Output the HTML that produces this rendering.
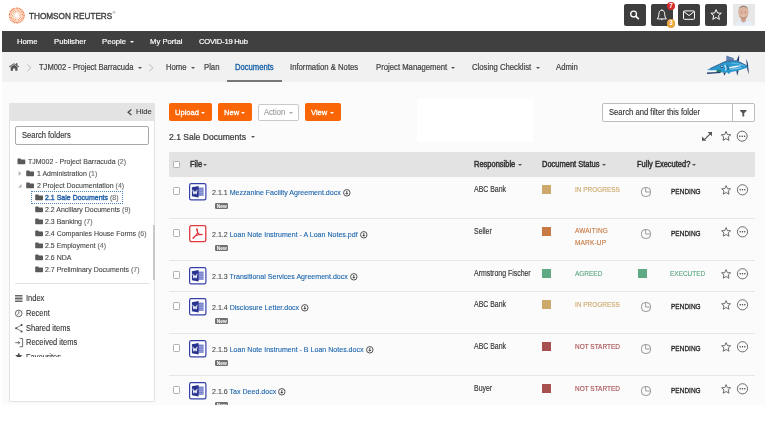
<!DOCTYPE html>
<html><head><meta charset="utf-8">
<style>
html,body{margin:0;padding:0;}
body{width:768px;height:432px;overflow:hidden;position:relative;background:#fff;font-family:"Liberation Sans",sans-serif;}
.a{position:absolute;}
.t{position:absolute;white-space:nowrap;line-height:1;transform:scaleY(1.1);transform-origin:0 50%;will-change:transform;}
svg{position:absolute;overflow:visible;}
#nav{left:2px;top:31px;width:763px;height:20.5px;background:#404040;}
#sub{left:2px;top:51.5px;width:763px;height:30px;background:#f1f1f1;}
#cont{left:2px;top:81.5px;width:763px;height:323px;background:#fbfbfb;}
.nv{color:#fff;font-size:7.7px;top:38.1px;-webkit-text-stroke:0.18px #fff;transform:scaleY(1.03)!important;}
.sn{color:#444;font-size:7.72px;top:63.9px;-webkit-text-stroke:0.2px #444;}
.caret{position:absolute;width:0;height:0;border-left:2px solid transparent;border-right:2px solid transparent;border-top:2px solid #555;}
#panel{left:8.8px;top:103.3px;width:146.2px;height:298.4px;background:#fff;border:1.1px solid #e2e2e2;border-radius:1px;box-sizing:border-box;}
#phead{left:8.8px;top:103.3px;width:146.2px;height:17.5px;background:#e3e3e3;border-radius:2px 2px 0 0;}
.tr{color:#444;font-size:7.0px;-webkit-text-stroke:0.1px #444;}
.li{color:#333;font-size:7.5px;-webkit-text-stroke:0.1px #333;}
.btn{position:absolute;top:103.3px;height:17.7px;background:#fa6505;border-radius:2px;}
.bt{color:#fff;font-size:7.55px;font-weight:400;top:108.5px;-webkit-text-stroke:0.28px #fff;transform:scaleY(1.03)!important;}
.hd{color:#333;font-size:7.5px;font-weight:400;top:160.5px;-webkit-text-stroke:0.42px #333;}
.sep{position:absolute;left:168.5px;width:586px;height:1px;background:#e6e6e6;}
.cb{position:absolute;width:5.4px;height:5.6px;border:0.75px solid #b0b0b0;border-radius:1.2px;background:#fff;}
.fn{font-size:7.07px;color:#4a4a4a;-webkit-text-stroke:0.1px #4a4a4a;}
.fn b{font-weight:400;color:#1b64ad;-webkit-text-stroke:0.1px #1b64ad;}
.new{position:absolute;width:13.4px;height:6.4px;background:#707070;border-radius:1.2px;color:#fff;font-size:4.8px;font-weight:700;line-height:7.2px;text-align:center;will-change:transform;}
.rs{color:#333;font-size:6.95px;-webkit-text-stroke:0.12px #333;transform:scaleY(1.17)!important;}
.sw{position:absolute;width:9px;height:9px;}
.st{font-size:6.48px;-webkit-text-stroke:0.12px currentColor;transform:scaleY(1.2)!important;}
.pd{color:#1c1c1c;font-size:6.45px;font-weight:400;-webkit-text-stroke:0.24px #1c1c1c;letter-spacing:0.05px;transform:scaleY(1.19)!important;}
</style></head><body>

<!-- top header -->
<svg style="left:8px;top:7px" width="18" height="18" viewBox="0 0 18 18">
  <circle cx="8.75" cy="8.45" r="7.3" fill="none" stroke="#f36b2a" stroke-width="1.3" stroke-dasharray="0.9 0.55"/>
  <circle cx="8.75" cy="8.45" r="5.7" fill="none" stroke="#f47a3c" stroke-width="1.2" stroke-dasharray="0.8 0.6" transform="rotate(12 8.75 8.45)"/>
  <circle cx="8.75" cy="8.45" r="4.1" fill="none" stroke="#f58a50" stroke-width="1.1" stroke-dasharray="0.7 0.6" transform="rotate(25 8.75 8.45)"/>
  <circle cx="8.75" cy="8.45" r="2.6" fill="none" stroke="#f7a070" stroke-width="0.9" stroke-dasharray="0.6 0.6"/>
</svg>
<div class="t" style="left:28.9px;top:11.2px;font-size:8.2px;font-weight:400;color:#404040;-webkit-text-stroke:0.35px #404040;transform:scaleY(1.08);transform-origin:0 0;">THOMSON REUTERS<span style="font-size:4px;vertical-align:4px;-webkit-text-stroke:0;margin-left:0.3px;">®</span></div>

<!-- top right buttons -->
<div class="a" style="left:624px;top:4.3px;width:21.5px;height:21.5px;background:#3d3d3d;border-radius:2px;"></div>
<svg style="left:624px;top:4.3px" width="22" height="22" viewBox="0 0 22 22">
  <circle cx="9.6" cy="10.1" r="2.9" fill="none" stroke="#fff" stroke-width="1.3"/>
  <line x1="11.8" y1="12.3" x2="14.4" y2="14.6" stroke="#fff" stroke-width="1.7" stroke-linecap="round"/>
</svg>
<div class="a" style="left:651px;top:4.3px;width:21.5px;height:21.5px;background:#3d3d3d;border-radius:2px;"></div>
<svg style="left:651px;top:4.3px" width="22" height="22" viewBox="0 0 22 22">
  <path d="M6.2 14.9 Q7.9 13.3 7.9 10.4 Q7.9 6.3 10.8 6.3 Q13.7 6.3 13.7 10.4 Q13.7 13.3 15.4 14.9 Z" fill="none" stroke="#fff" stroke-width="0.95" stroke-linejoin="round"/>
  <circle cx="10.8" cy="5.8" r="0.6" fill="#fff"/>
  <path d="M9.7 15.3 Q10.8 17.2 11.9 15.3 Z" fill="#fff"/>
</svg>
<div class="a" style="left:666.8px;top:1.7px;width:8.6px;height:8.6px;background:#d42a2a;border-radius:50%;color:#fff;font-size:6.4px;font-weight:700;line-height:8.8px;text-align:center;">7</div>
<div class="a" style="left:666.8px;top:19.4px;width:8.6px;height:8.6px;background:#eba33b;border-radius:50%;color:#fff;font-size:6.4px;font-weight:700;line-height:8.8px;text-align:center;">3</div>
<div class="a" style="left:678px;top:4.3px;width:22px;height:21.5px;background:#3d3d3d;border-radius:2px;"></div>
<svg style="left:678px;top:4.3px" width="22" height="22" viewBox="0 0 22 22">
  <rect x="5.5" y="6.9" width="11" height="8.4" rx="1" fill="none" stroke="#fff" stroke-width="1"/>
  <path d="M5.8 7.5 L11 11.6 L16.2 7.5" fill="none" stroke="#fff" stroke-width="1"/>
</svg>
<div class="a" style="left:705.2px;top:4.3px;width:21.8px;height:21.5px;background:#3d3d3d;border-radius:2px;"></div>
<svg style="left:705.2px;top:4.3px" width="22" height="22" viewBox="0 0 22 22">
  <path d="M11.1 5.6 L12.6 9 L16.3 9.2 L13.5 11.6 L14.4 15.4 L11.1 13.4 L7.8 15.4 L8.7 11.6 L5.9 9.2 L9.6 9 Z" fill="none" stroke="#fff" stroke-width="1" stroke-linejoin="round"/>
</svg>
<!-- avatar -->
<svg style="left:732.6px;top:4.2px" width="22" height="21.6" viewBox="0 0 22 21.6">
  <rect width="22" height="21.6" fill="#e7e7e7"/>
  <path d="M1.5 21.6 Q2.5 17.6 7 16.6 L10.5 16 L14 16.6 Q19 17.6 21 21.6 Z" fill="#e6edf6"/>
  <path d="M7.5 16.8 L10.4 19.2 L13.5 16.8" fill="none" stroke="#c9d3e0" stroke-width="0.5"/>
  <path d="M8 13.4 L13 13.4 L12.8 17 L10.5 18.4 L8.2 17Z" fill="#cfa28c"/>
  <ellipse cx="10.4" cy="8.3" rx="5.1" ry="6.6" fill="#dcb4a0"/>
  <path d="M5.3 8 Q5.2 1.4 10.4 1.4 Q15.6 1.4 15.5 8 Q15.3 5.6 14.6 4.4 Q12.8 2.8 10.4 2.9 Q7.8 2.8 6.2 4.4 Q5.5 5.6 5.3 8Z" fill="#9e8a80"/>
  <path d="M6 10.5 Q6.8 14.8 10.4 15 Q14 14.8 14.8 10.5 Q14 13.2 10.4 13.6 Q6.8 13.2 6 10.5Z" fill="#b98f7a"/>
  <ellipse cx="8.4" cy="8.2" rx="0.55" ry="0.4" fill="#5b3d30"/><ellipse cx="12.4" cy="8.2" rx="0.55" ry="0.4" fill="#5b3d30"/>
  <path d="M8.8 11.6 Q10.4 12.5 12 11.6" fill="none" stroke="#f4e6de" stroke-width="0.55"/>
</svg>

<!-- nav -->
<div id="nav" class="a"></div>
<div class="t nv" style="left:16.6px">Home</div>
<div class="t nv" style="left:53.8px">Publisher</div>
<div class="t nv" style="left:101.6px">People</div>
<div class="caret" style="left:129.8px;top:41px;border-top-color:#fff;"></div>
<div class="t nv" style="left:149.8px">My Portal</div>
<div class="t nv" style="left:198.5px;font-size:7.6px;letter-spacing:-0.2px;">COVID-19 Hub</div>

<!-- subnav -->
<div id="sub" class="a"></div>
<svg style="left:8.9px;top:63.2px" width="10.2" height="7.8" viewBox="0 0 10.2 7.8">
  <path d="M0 3.6 L5.1 0.2 L10.2 3.6 L9.6 4.3 L5.1 1.3 L0.6 4.3 Z" fill="#555"/>
  <path d="M1.7 3.9 L5.1 1.7 L8.5 3.9 L8.5 7.8 L6.2 7.8 L6.2 5.6 L4 5.6 L4 7.8 L1.7 7.8 Z" fill="#555"/>
  <rect x="7.1" y="0.1" width="1.3" height="2.6" fill="#555"/>
</svg>
<svg style="left:26.9px;top:63.5px" width="4.4" height="7.4" viewBox="0 0 4.4 7.4"><path d="M0.4 0.3 L3.9 3.7 L0.4 7.1" fill="none" stroke="#a0a0a0" stroke-width="0.7"/></svg>
<div class="t sn" style="left:38.7px;font-size:7.55px;">TJM002 - Project Barracuda</div>
<div class="caret" style="left:137.8px;top:66.6px;"></div>
<svg style="left:149.3px;top:63.5px" width="4.4" height="7.4" viewBox="0 0 4.4 7.4"><path d="M0.4 0.3 L3.9 3.7 L0.4 7.1" fill="none" stroke="#a0a0a0" stroke-width="0.7"/></svg>
<div class="t sn" style="left:166.3px">Home</div>
<div class="caret" style="left:191.3px;top:66.6px;"></div>
<div class="t sn" style="left:203.5px">Plan</div>
<div class="t sn" style="left:235.3px;font-size:7.65px;color:#1a62a8;-webkit-text-stroke:0.3px #1a62a8;">Documents</div>
<div class="a" style="left:227.3px;top:79.5px;width:55px;height:2px;background:#777;"></div>
<div class="t sn" style="left:290.3px">Information &amp; Notes</div>
<div class="t sn" style="left:375.6px">Project Management</div>
<div class="caret" style="left:451.4px;top:66.6px;"></div>
<div class="t sn" style="left:471.9px">Closing Checklist</div>
<div class="caret" style="left:535.6px;top:66.6px;"></div>
<div class="t sn" style="left:556px">Admin</div>
<!-- fish -->
<svg style="left:706px;top:54px" width="44" height="23" viewBox="0 0 44 23">
  <path d="M20.2 7.6 L20.2 1.4 L28 4.3 L28 6.6 Z" fill="#6f8fbc"/>
  <path d="M22 2.4 L22 7.3 M24 3 L24 7 M26 3.6 L26 6.8" stroke="#3f5f90" stroke-width="0.6"/>
  <path d="M30.6 6.6 L33.2 0.8 L33 7 Z" fill="#1d3a6a"/>
  <path d="M40.2 4.8 L41.8 9 L43 20.4 L41.4 16 L40.9 12Z" fill="#1d3a6a"/>
  <path d="M0.8 16.1 L13.6 10.2 Q17 8.2 20 7.4 L30.5 6.7 Q36 9 41.8 12.4 L41.8 13.6 Q36 15.6 31.8 16.8 L24.9 18 L23 19.9 L21 18.4 L16.8 18.6 L13 18 Z" fill="#2a98cd"/>
  <path d="M4 14.6 L13.6 10.2 Q17 8.2 20 7.4 L30.5 6.7 Q36 9 41.8 12.4" fill="none" stroke="#1f4a7e" stroke-width="0.8"/>
  <path d="M25 9 Q33 9.2 39 11.8" fill="none" stroke="#7cc9ec" stroke-width="0.7"/>
  <path d="M1 16.4 L12.5 16 L14.6 17.4 L1.4 18.4 Z" fill="#eef3f6"/>
  <path d="M10.5 16 L14.9 15.8 L15 18.6 L10.5 18.4Z" fill="#227d6c"/>
  <path d="M0.8 18.4 L14 17.9 L14.6 19 L1.2 19.9 Z" fill="#1d3a6a"/>
  <path d="M23 13.2 Q29 11 36 11.6 Q30 14.2 23 14.2 Z" fill="#eaf5fb"/>
  <path d="M24 15.2 Q30 15 35.5 13.6" fill="none" stroke="#9cd3ee" stroke-width="0.9"/>
  <path d="M18.6 10.8 Q20.8 13.6 19.4 16.6" fill="none" stroke="#b5e2f4" stroke-width="1.3"/>
  <path d="M21.2 11.4 Q22.8 13.6 22 15.8" fill="none" stroke="#1f4a7e" stroke-width="0.8"/>
  <path d="M17.4 18.5 L18.2 21.8 L20 18.5Z" fill="#1d3a6a"/>
  <path d="M30.4 16.9 L31.2 22 L32.6 16.6 Z" fill="#1d3a6a"/>
  <circle cx="15.8" cy="12.7" r="1.3" fill="#1d3a6a"/><circle cx="15.9" cy="12.6" r="0.75" fill="#eef3f6"/>
</svg>

<!-- content bg -->
<div id="cont" class="a"></div>

<!-- left panel -->
<div id="panel" class="a"></div>
<div id="phead" class="a"></div>
<svg style="left:126.8px;top:109px" width="5.2" height="6.4" viewBox="0 0 5.2 6.4"><path d="M4.4 0.5 L1.1 3.2 L4.4 5.9" fill="none" stroke="#4a4a4a" stroke-width="1.3"/></svg>
<div class="t" style="left:136.2px;top:108.3px;font-size:7.6px;color:#3a3a3a;-webkit-text-stroke:0.15px #3a3a3a;transform:scaleY(1.02);">Hide</div>
<div class="a" style="left:15.2px;top:126px;width:133.5px;height:18.6px;border:0.8px solid #a9a9a9;border-radius:2px;box-sizing:border-box;background:#fff;"></div>
<div class="t" style="left:22.1px;top:132px;font-size:7.55px;color:#3a3a3a;-webkit-text-stroke:0.15px #3a3a3a;">Search folders</div>

<!-- tree -->
<svg style="left:0;top:0" width="160" height="280" viewBox="0 0 160 280">
  <path transform="translate(17.5 158.6)" d="M0 0.6 Q0 0 0.6 0 L3 0 L3.8 1 L7.2 1 Q7.8 1 7.8 1.6 L7.8 5 Q7.8 5.6 7.2 5.6 L0.6 5.6 Q0 5.6 0 5 Z" fill="#5a5a5a"/>
  <path transform="translate(26.2 170.6)" d="M0 0.6 Q0 0 0.6 0 L3 0 L3.8 1 L7.2 1 Q7.8 1 7.8 1.6 L7.8 5 Q7.8 5.6 7.2 5.6 L0.6 5.6 Q0 5.6 0 5 Z" fill="#5a5a5a"/>
  <path transform="translate(26.2 182.6)" d="M0 0.6 Q0 0 0.6 0 L3 0 L3.8 1 L7.2 1 Q7.8 1 7.8 1.6 L7.8 5 Q7.8 5.6 7.2 5.6 L0.6 5.6 Q0 5.6 0 5 Z" fill="#5a5a5a"/>
  <path transform="translate(35.2 194.6)" d="M0 0.6 Q0 0 0.6 0 L3 0 L3.8 1 L7.2 1 Q7.8 1 7.8 1.6 L7.8 5 Q7.8 5.6 7.2 5.6 L0.6 5.6 Q0 5.6 0 5 Z" fill="#5a5a5a"/>
  <path transform="translate(35.2 206.6)" d="M0 0.6 Q0 0 0.6 0 L3 0 L3.8 1 L7.2 1 Q7.8 1 7.8 1.6 L7.8 5 Q7.8 5.6 7.2 5.6 L0.6 5.6 Q0 5.6 0 5 Z" fill="#5a5a5a"/>
  <path transform="translate(35.2 218.6)" d="M0 0.6 Q0 0 0.6 0 L3 0 L3.8 1 L7.2 1 Q7.8 1 7.8 1.6 L7.8 5 Q7.8 5.6 7.2 5.6 L0.6 5.6 Q0 5.6 0 5 Z" fill="#5a5a5a"/>
  <path transform="translate(35.2 230.6)" d="M0 0.6 Q0 0 0.6 0 L3 0 L3.8 1 L7.2 1 Q7.8 1 7.8 1.6 L7.8 5 Q7.8 5.6 7.2 5.6 L0.6 5.6 Q0 5.6 0 5 Z" fill="#5a5a5a"/>
  <path transform="translate(35.2 242.6)" d="M0 0.6 Q0 0 0.6 0 L3 0 L3.8 1 L7.2 1 Q7.8 1 7.8 1.6 L7.8 5 Q7.8 5.6 7.2 5.6 L0.6 5.6 Q0 5.6 0 5 Z" fill="#5a5a5a"/>
  <path transform="translate(35.2 254.6)" d="M0 0.6 Q0 0 0.6 0 L3 0 L3.8 1 L7.2 1 Q7.8 1 7.8 1.6 L7.8 5 Q7.8 5.6 7.2 5.6 L0.6 5.6 Q0 5.6 0 5 Z" fill="#5a5a5a"/>
  <path transform="translate(35.2 266.6)" d="M0 0.6 Q0 0 0.6 0 L3 0 L3.8 1 L7.2 1 Q7.8 1 7.8 1.6 L7.8 5 Q7.8 5.6 7.2 5.6 L0.6 5.6 Q0 5.6 0 5 Z" fill="#5a5a5a"/>
  <path d="M18.6 170.9 L21.4 173.4 L18.6 175.9Z" fill="#b3b3b3"/>
  <path d="M21.6 183.9 L21.6 187.6 L17.9 187.6Z" fill="#b3b3b3"/>
</svg>
<div class="t tr" style="left:27.5px;top:158px;">TJM002 - Project Barracuda <span style="color:#777">(2)</span></div>
<div class="t tr" style="left:36.9px;top:170px;">1 Administration <span style="color:#777">(1)</span></div>
<div class="t tr" style="left:36.9px;top:182px;">2 Project Documentation <span style="color:#777">(4)</span></div>
<div class="a" style="left:31px;top:191.2px;width:91.8px;height:13px;border:0.8px dotted #4f86c6;box-sizing:border-box;"></div>
<div class="t tr" style="left:45.1px;top:194px;"><span style="color:#1f5fa8;-webkit-text-stroke:0.35px #1f5fa8;">2.1 Sale Documents</span> <span style="color:#777">(8)</span></div>
<div class="t tr" style="left:45.1px;top:206px;">2.2 Ancillary Documents <span style="color:#777">(9)</span></div>
<div class="t tr" style="left:45.1px;top:218px;">2.3 Banking <span style="color:#777">(7)</span></div>
<div class="t tr" style="left:45.1px;top:230px;">2.4 Companies House Forms <span style="color:#777">(6)</span></div>
<div class="t tr" style="left:45.1px;top:242px;">2.5 Employment <span style="color:#777">(4)</span></div>
<div class="t tr" style="left:45.1px;top:254px;">2.6 NDA</div>
<div class="t tr" style="left:45.1px;top:266px;">2.7 Preliminary Documents <span style="color:#777">(7)</span></div>
<div class="a" style="left:153.2px;top:225px;width:1.5px;height:55px;background:#c8c8c8;"></div>
<div class="a" style="left:15.2px;top:283.3px;width:134px;height:0.8px;background:#e3e3e3;"></div>

<div class="a" style="left:10px;top:285px;width:140px;height:72.2px;overflow:hidden;">
  <svg style="left:5px;top:10px" width="9" height="70" viewBox="0 0 9 70">
    <g stroke="#4a4a4a" stroke-width="0.85">
      <line x1="0" y1="0.5" x2="7.5" y2="0.5"/><line x1="0" y1="2" x2="7.5" y2="2"/><line x1="0" y1="3.5" x2="7.5" y2="3.5"/><line x1="0" y1="5" x2="7.5" y2="5"/><line x1="0" y1="6.5" x2="7.5" y2="6.5"/>
    </g>
    <circle cx="3.7" cy="18.4" r="3.3" fill="none" stroke="#4a4a4a" stroke-width="0.85"/>
    <path d="M3.8 16.2 L3.8 18.6 L2.4 19.6" fill="none" stroke="#4a4a4a" stroke-width="0.8"/>
    <g fill="#4a4a4a"><circle cx="1.1" cy="33.2" r="1"/><circle cx="6.6" cy="29.9" r="1"/><circle cx="6.6" cy="36.5" r="1"/></g>
    <path d="M1.1 33.2 L6.6 29.9 M1.1 33.2 L6.6 36.5" stroke="#4a4a4a" stroke-width="0.7"/>
    <path d="M0.2 47.7 L4.6 47.7 M3.2 46.2 L4.7 47.7 L3.2 49.2 M4.6 43.6 L7.6 43.6 L7.6 51.8 L4.6 51.8" fill="none" stroke="#4a4a4a" stroke-width="0.8"/>
    <path d="M3.8 57.6 L4.9 60 L7.4 60.2 L5.5 61.9 L6.1 64.4 L3.8 63.1 L1.5 64.4 L2.1 61.9 L0.2 60.2 L2.7 60Z" fill="#4a4a4a"/>
  </svg>
  <div class="t li" style="left:15.9px;top:10.2px;">Index</div>
  <div class="t li" style="left:15.9px;top:24.95px;">Recent</div>
  <div class="t li" style="left:15.9px;top:39.7px;">Shared items</div>
  <div class="t li" style="left:15.9px;top:54.45px;">Received items</div>
  <div class="t li" style="left:15.9px;top:69.2px;">Favourites</div>
</div>

<!-- toolbar -->
<div class="btn" style="left:168.7px;width:43.1px;"></div>
<div class="t bt" style="left:175px;">Upload</div>
<div class="caret" style="left:201.3px;top:111.8px;border-top-color:#fff;"></div>
<div class="btn" style="left:217.5px;width:34.5px;"></div>
<div class="t bt" style="left:223.5px;">New</div>
<div class="caret" style="left:241.2px;top:111.8px;border-top-color:#fff;"></div>
<div class="a" style="left:258.3px;top:103.5px;width:40.3px;height:17px;border:0.8px solid #c9c9c9;border-radius:2px;box-sizing:border-box;background:#fff;"></div>
<div class="t" style="left:264.4px;top:108.7px;font-size:7.6px;color:#a0a0a0;-webkit-text-stroke:0.15px #a0a0a0;">Action</div>
<div class="caret" style="left:289px;top:111.6px;border-top-color:#aaa;"></div>
<div class="btn" style="left:305px;width:35.7px;"></div>
<div class="t bt" style="left:311.2px;">View</div>
<div class="caret" style="left:330px;top:111.8px;border-top-color:#fff;"></div>

<div class="a" style="left:417.1px;top:99.4px;width:116.2px;height:42.3px;background:#fff;"></div>

<div class="t" style="left:168.9px;top:132.7px;font-size:8.56px;color:#3c3c3c;-webkit-text-stroke:0.22px #3c3c3c;">2.1 Sale Documents</div>
<div class="caret" style="left:250.8px;top:136px;"></div>

<div class="a" style="left:602px;top:103.4px;width:152.5px;height:18.4px;border:0.8px solid #bdbdbd;border-radius:2px;box-sizing:border-box;background:#fff;"></div>
<div class="a" style="left:732.3px;top:103.4px;width:0.8px;height:18.4px;background:#bdbdbd;"></div>
<div class="t" style="left:608.75px;top:108.8px;font-size:7.67px;color:#333;-webkit-text-stroke:0.12px #333;">Search and filter this folder</div>
<svg style="left:739.6px;top:109.6px" width="7" height="7" viewBox="0 0 7 7"><path d="M0 0 L6.6 0 L6.6 0.8 L4.2 3.2 L4.2 6.4 L2.4 6.4 L2.4 3.2 L0 0.8Z" fill="#555"/></svg>

<svg style="left:702px;top:130px" width="50" height="12" viewBox="0 0 50 12">
  <path d="M2.6 9.4 L9.2 2.8" stroke="#555" stroke-width="1.2"/>
  <path d="M5.6 1.9 L10 1.9 L10 6.3 Z" fill="#555"/><path d="M0 6.4 L0 10.8 L4.4 10.8Z" fill="#555"/>
  <path d="M24 1.4 L25.4 4.6 L28.8 4.8 L26.2 7 L27 10.4 L24 8.6 L21 10.4 L21.8 7 L19.2 4.8 L22.6 4.6Z" fill="none" stroke="#555" stroke-width="0.9" stroke-linejoin="round"/>
  <circle cx="40.2" cy="6.2" r="5" fill="none" stroke="#555" stroke-width="0.9"/>
  <g fill="#444"><circle cx="37.8" cy="6.2" r="0.8"/><circle cx="40.2" cy="6.2" r="0.8"/><circle cx="42.6" cy="6.2" r="0.8"/></g>
</svg>

<!-- table header -->
<div class="a" style="left:168.5px;top:152px;width:586px;height:24.5px;background:#e3e3e3;"></div>
<div class="cb" style="left:173px;top:160.6px;"></div>
<div class="t hd" style="left:189.5px;">File</div>
<div class="caret" style="left:203px;top:164px;border-top-color:#555;"></div>
<div class="t hd" style="left:473.8px;">Responsible</div>
<div class="caret" style="left:517.5px;top:164px;"></div>
<div class="t hd" style="left:541.8px;">Document Status</div>
<div class="caret" style="left:602px;top:164px;"></div>
<div class="t hd" style="left:636.9px;">Fully Executed?</div>
<div class="caret" style="left:692px;top:164px;"></div>

<div id="rows">
<div class="cb" style="left:173px;top:187.1px;"></div>
<svg style="left:189.2px;top:183.2px" width="17.5" height="17.4" viewBox="0 0 17.5 17.4"><rect x="0.6" y="0.6" width="16.3" height="16.2" rx="1.6" fill="#fff" stroke="#3440a8" stroke-width="1.2"/><rect x="8.6" y="4.6" width="6" height="8.2" fill="#6b76c6"/><path d="M9.4 6.2 L14.6 6.2 M9.4 7.9 L14.6 7.9 M9.4 9.6 L14.6 9.6 M9.4 11.3 L14.6 11.3" stroke="#c5cbee" stroke-width="0.55"/><path d="M2.9 4.2 L9.6 3.1 L9.6 14.4 L2.9 13.3Z" fill="#27338f"/><path d="M3.9 6.8 L4.9 11.2 L6 8.2 L7.1 11.2 L8.1 6.8" fill="none" stroke="#fff" stroke-width="0.9" stroke-linejoin="round"/></svg>
<div class="t fn" style="left:212px;top:188.8px;">2.1.1 <b>Mezzanine Facility Agreement.docx</b></div>
<svg style="left:342.965625px;top:188.8px" width="7.6" height="7.6" viewBox="0 0 7.6 7.6"><circle cx="3.8" cy="3.8" r="3.25" fill="none" stroke="#4a4a4a" stroke-width="0.95"/><path d="M3.8 1.9 L3.8 4.6" stroke="#4a4a4a" stroke-width="1"/><path d="M2.2 3.9 L3.8 5.7 L5.4 3.9Z" fill="#4a4a4a"/></svg>
<div class="new" style="left:214.8px;top:202.7px;">New</div>
<div class="t rs" style="left:474px;top:186.6px;">ABC Bank</div>
<div class="sw" style="left:542px;top:185.2px;background:#cda96c;"></div>
<div class="t st" style="left:575px;top:186.6px;color:#cda96c;">IN PROGRESS</div>
<svg style="left:641px;top:187.2px" width="10" height="10" viewBox="0 0 10 10"><rect x="0.5" y="0.6" width="9" height="8.8" rx="3.6" fill="none" stroke="#8f8f8f" stroke-width="0.95"/><path d="M4.6 0.8 L4.6 5 L9 5" fill="none" stroke="#8f8f8f" stroke-width="0.85"/></svg>
<div class="t pd" style="left:670.8px;top:189.1px;">PENDING</div>
<svg style="left:721px;top:185.4px" width="30" height="11" viewBox="0 0 30 11"><path d="M5.1 0.6 L6.4 3.6 L9.6 3.8 L7.2 5.9 L8 9.2 L5.1 7.5 L2.2 9.2 L3 5.9 L0.6 3.8 L3.8 3.6Z" fill="none" stroke="#555" stroke-width="0.85" stroke-linejoin="round"/><circle cx="21.5" cy="4.8" r="5.1" fill="none" stroke="#555" stroke-width="0.85"/><g fill="#444"><circle cx="19.2" cy="4.8" r="0.75"/><circle cx="21.5" cy="4.8" r="0.75"/><circle cx="23.8" cy="4.8" r="0.75"/></g></svg>
<div class="sep" style="top:218.0px"></div>
<div class="cb" style="left:173px;top:229.1px;"></div>
<svg style="left:189.2px;top:225.2px" width="17.5" height="17.4" viewBox="0 0 17.5 17.4"><rect x="0.7" y="0.7" width="16.1" height="16" rx="1.6" fill="#fff" stroke="#e0383e" stroke-width="1.3"/><path d="M8 3.6 Q7.2 4.2 8 5.6 L8.8 7.6 L6.6 10.8 L4.2 12.6 Q3.6 13.2 4.2 13.4 L6.6 10.8 L10.4 9.6 L12.8 9.8 Q13.6 9.6 12.8 9.2 L10.4 9.6 L8.8 7.6 L8.4 5.4 Q8.6 4 8 3.6Z" fill="none" stroke="#e0383e" stroke-width="1.1" stroke-linejoin="round"/></svg>
<div class="t fn" style="left:212px;top:230.8px;">2.1.2 <b>Loan Note Instrument - A Loan Notes.pdf</b></div>
<svg style="left:359.871875px;top:230.8px" width="7.6" height="7.6" viewBox="0 0 7.6 7.6"><circle cx="3.8" cy="3.8" r="3.25" fill="none" stroke="#4a4a4a" stroke-width="0.95"/><path d="M3.8 1.9 L3.8 4.6" stroke="#4a4a4a" stroke-width="1"/><path d="M2.2 3.9 L3.8 5.7 L5.4 3.9Z" fill="#4a4a4a"/></svg>
<div class="new" style="left:214.8px;top:244.7px;">New</div>
<div class="t rs" style="left:474px;top:228.6px;">Seller</div>
<div class="sw" style="left:542px;top:227.2px;background:#c77a44;"></div>
<div class="t st" style="left:575px;top:226.5px;color:#c77a44;line-height:9.8px;letter-spacing:0.2px;">AWAITING<br>MARK-UP</div>
<svg style="left:641px;top:229.2px" width="10" height="10" viewBox="0 0 10 10"><rect x="0.5" y="0.6" width="9" height="8.8" rx="3.6" fill="none" stroke="#8f8f8f" stroke-width="0.95"/><path d="M4.6 0.8 L4.6 5 L9 5" fill="none" stroke="#8f8f8f" stroke-width="0.85"/></svg>
<div class="t pd" style="left:670.8px;top:231.1px;">PENDING</div>
<svg style="left:721px;top:227.4px" width="30" height="11" viewBox="0 0 30 11"><path d="M5.1 0.6 L6.4 3.6 L9.6 3.8 L7.2 5.9 L8 9.2 L5.1 7.5 L2.2 9.2 L3 5.9 L0.6 3.8 L3.8 3.6Z" fill="none" stroke="#555" stroke-width="0.85" stroke-linejoin="round"/><circle cx="21.5" cy="4.8" r="5.1" fill="none" stroke="#555" stroke-width="0.85"/><g fill="#444"><circle cx="19.2" cy="4.8" r="0.75"/><circle cx="21.5" cy="4.8" r="0.75"/><circle cx="23.8" cy="4.8" r="0.75"/></g></svg>
<div class="sep" style="top:260.0px"></div>
<div class="cb" style="left:173px;top:271.1px;"></div>
<svg style="left:189.2px;top:267.2px" width="17.5" height="17.4" viewBox="0 0 17.5 17.4"><rect x="0.6" y="0.6" width="16.3" height="16.2" rx="1.6" fill="#fff" stroke="#3440a8" stroke-width="1.2"/><rect x="8.6" y="4.6" width="6" height="8.2" fill="#6b76c6"/><path d="M9.4 6.2 L14.6 6.2 M9.4 7.9 L14.6 7.9 M9.4 9.6 L14.6 9.6 M9.4 11.3 L14.6 11.3" stroke="#c5cbee" stroke-width="0.55"/><path d="M2.9 4.2 L9.6 3.1 L9.6 14.4 L2.9 13.3Z" fill="#27338f"/><path d="M3.9 6.8 L4.9 11.2 L6 8.2 L7.1 11.2 L8.1 6.8" fill="none" stroke="#fff" stroke-width="0.9" stroke-linejoin="round"/></svg>
<div class="t fn" style="left:212px;top:272.8px;">2.1.3 <b>Transitional Services Agreement.docx</b></div>
<svg style="left:350.04375px;top:272.8px" width="7.6" height="7.6" viewBox="0 0 7.6 7.6"><circle cx="3.8" cy="3.8" r="3.25" fill="none" stroke="#4a4a4a" stroke-width="0.95"/><path d="M3.8 1.9 L3.8 4.6" stroke="#4a4a4a" stroke-width="1"/><path d="M2.2 3.9 L3.8 5.7 L5.4 3.9Z" fill="#4a4a4a"/></svg>
<div class="t rs" style="left:474px;top:270.6px;">Armstrong Fischer</div>
<div class="sw" style="left:542px;top:269.2px;background:#5fa984;"></div>
<div class="t st" style="left:575px;top:270.6px;color:#5fa984;">AGREED</div>
<div class="sw" style="left:637.5px;top:269.2px;background:#5fa984;"></div>
<div class="t st" style="left:670px;top:270.6px;color:#5fa984;">EXECUTED</div>
<svg style="left:721px;top:268.8px" width="30" height="11" viewBox="0 0 30 11"><path d="M5.1 0.6 L6.4 3.6 L9.6 3.8 L7.2 5.9 L8 9.2 L5.1 7.5 L2.2 9.2 L3 5.9 L0.6 3.8 L3.8 3.6Z" fill="none" stroke="#555" stroke-width="0.85" stroke-linejoin="round"/><circle cx="21.5" cy="4.8" r="5.1" fill="none" stroke="#555" stroke-width="0.85"/><g fill="#444"><circle cx="19.2" cy="4.8" r="0.75"/><circle cx="21.5" cy="4.8" r="0.75"/><circle cx="23.8" cy="4.8" r="0.75"/></g></svg>
<div class="sep" style="top:291.0px"></div>
<div class="cb" style="left:173px;top:302.1px;"></div>
<svg style="left:189.2px;top:298.2px" width="17.5" height="17.4" viewBox="0 0 17.5 17.4"><rect x="0.6" y="0.6" width="16.3" height="16.2" rx="1.6" fill="#fff" stroke="#3440a8" stroke-width="1.2"/><rect x="8.6" y="4.6" width="6" height="8.2" fill="#6b76c6"/><path d="M9.4 6.2 L14.6 6.2 M9.4 7.9 L14.6 7.9 M9.4 9.6 L14.6 9.6 M9.4 11.3 L14.6 11.3" stroke="#c5cbee" stroke-width="0.55"/><path d="M2.9 4.2 L9.6 3.1 L9.6 14.4 L2.9 13.3Z" fill="#27338f"/><path d="M3.9 6.8 L4.9 11.2 L6 8.2 L7.1 11.2 L8.1 6.8" fill="none" stroke="#fff" stroke-width="0.9" stroke-linejoin="round"/></svg>
<div class="t fn" style="left:212px;top:303.8px;">2.1.4 <b>Disclosure Letter.docx</b></div>
<svg style="left:301.35625px;top:303.8px" width="7.6" height="7.6" viewBox="0 0 7.6 7.6"><circle cx="3.8" cy="3.8" r="3.25" fill="none" stroke="#4a4a4a" stroke-width="0.95"/><path d="M3.8 1.9 L3.8 4.6" stroke="#4a4a4a" stroke-width="1"/><path d="M2.2 3.9 L3.8 5.7 L5.4 3.9Z" fill="#4a4a4a"/></svg>
<div class="new" style="left:214.8px;top:317.7px;">New</div>
<div class="t rs" style="left:474px;top:301.6px;">ABC Bank</div>
<div class="sw" style="left:542px;top:300.2px;background:#cda96c;"></div>
<div class="t st" style="left:575px;top:301.6px;color:#cda96c;">IN PROGRESS</div>
<svg style="left:641px;top:302.2px" width="10" height="10" viewBox="0 0 10 10"><rect x="0.5" y="0.6" width="9" height="8.8" rx="3.6" fill="none" stroke="#8f8f8f" stroke-width="0.95"/><path d="M4.6 0.8 L4.6 5 L9 5" fill="none" stroke="#8f8f8f" stroke-width="0.85"/></svg>
<div class="t pd" style="left:670.8px;top:304.1px;">PENDING</div>
<svg style="left:721px;top:300.4px" width="30" height="11" viewBox="0 0 30 11"><path d="M5.1 0.6 L6.4 3.6 L9.6 3.8 L7.2 5.9 L8 9.2 L5.1 7.5 L2.2 9.2 L3 5.9 L0.6 3.8 L3.8 3.6Z" fill="none" stroke="#555" stroke-width="0.85" stroke-linejoin="round"/><circle cx="21.5" cy="4.8" r="5.1" fill="none" stroke="#555" stroke-width="0.85"/><g fill="#444"><circle cx="19.2" cy="4.8" r="0.75"/><circle cx="21.5" cy="4.8" r="0.75"/><circle cx="23.8" cy="4.8" r="0.75"/></g></svg>
<div class="sep" style="top:333.0px"></div>
<div class="cb" style="left:173px;top:344.1px;"></div>
<svg style="left:189.2px;top:340.2px" width="17.5" height="17.4" viewBox="0 0 17.5 17.4"><rect x="0.6" y="0.6" width="16.3" height="16.2" rx="1.6" fill="#fff" stroke="#3440a8" stroke-width="1.2"/><rect x="8.6" y="4.6" width="6" height="8.2" fill="#6b76c6"/><path d="M9.4 6.2 L14.6 6.2 M9.4 7.9 L14.6 7.9 M9.4 9.6 L14.6 9.6 M9.4 11.3 L14.6 11.3" stroke="#c5cbee" stroke-width="0.55"/><path d="M2.9 4.2 L9.6 3.1 L9.6 14.4 L2.9 13.3Z" fill="#27338f"/><path d="M3.9 6.8 L4.9 11.2 L6 8.2 L7.1 11.2 L8.1 6.8" fill="none" stroke="#fff" stroke-width="0.9" stroke-linejoin="round"/></svg>
<div class="t fn" style="left:212px;top:345.8px;">2.1.5 <b>Loan Note Instrument - B Loan Notes.docx</b></div>
<svg style="left:365.746875px;top:345.8px" width="7.6" height="7.6" viewBox="0 0 7.6 7.6"><circle cx="3.8" cy="3.8" r="3.25" fill="none" stroke="#4a4a4a" stroke-width="0.95"/><path d="M3.8 1.9 L3.8 4.6" stroke="#4a4a4a" stroke-width="1"/><path d="M2.2 3.9 L3.8 5.7 L5.4 3.9Z" fill="#4a4a4a"/></svg>
<div class="new" style="left:214.8px;top:359.7px;">New</div>
<div class="t rs" style="left:474px;top:343.6px;">ABC Bank</div>
<div class="sw" style="left:542px;top:342.2px;background:#a84f4f;"></div>
<div class="t st" style="left:575px;top:343.6px;color:#a84f4f;">NOT STARTED</div>
<svg style="left:641px;top:344.2px" width="10" height="10" viewBox="0 0 10 10"><rect x="0.5" y="0.6" width="9" height="8.8" rx="3.6" fill="none" stroke="#8f8f8f" stroke-width="0.95"/><path d="M4.6 0.8 L4.6 5 L9 5" fill="none" stroke="#8f8f8f" stroke-width="0.85"/></svg>
<div class="t pd" style="left:670.8px;top:346.1px;">PENDING</div>
<svg style="left:721px;top:342.4px" width="30" height="11" viewBox="0 0 30 11"><path d="M5.1 0.6 L6.4 3.6 L9.6 3.8 L7.2 5.9 L8 9.2 L5.1 7.5 L2.2 9.2 L3 5.9 L0.6 3.8 L3.8 3.6Z" fill="none" stroke="#555" stroke-width="0.85" stroke-linejoin="round"/><circle cx="21.5" cy="4.8" r="5.1" fill="none" stroke="#555" stroke-width="0.85"/><g fill="#444"><circle cx="19.2" cy="4.8" r="0.75"/><circle cx="21.5" cy="4.8" r="0.75"/><circle cx="23.8" cy="4.8" r="0.75"/></g></svg>
<div class="sep" style="top:375.0px"></div>
<div class="cb" style="left:173px;top:386.1px;"></div>
<svg style="left:189.2px;top:382.2px" width="17.5" height="17.4" viewBox="0 0 17.5 17.4"><rect x="0.6" y="0.6" width="16.3" height="16.2" rx="1.6" fill="#fff" stroke="#3440a8" stroke-width="1.2"/><rect x="8.6" y="4.6" width="6" height="8.2" fill="#6b76c6"/><path d="M9.4 6.2 L14.6 6.2 M9.4 7.9 L14.6 7.9 M9.4 9.6 L14.6 9.6 M9.4 11.3 L14.6 11.3" stroke="#c5cbee" stroke-width="0.55"/><path d="M2.9 4.2 L9.6 3.1 L9.6 14.4 L2.9 13.3Z" fill="#27338f"/><path d="M3.9 6.8 L4.9 11.2 L6 8.2 L7.1 11.2 L8.1 6.8" fill="none" stroke="#fff" stroke-width="0.9" stroke-linejoin="round"/></svg>
<div class="t fn" style="left:212px;top:387.8px;">2.1.6 <b>Tax Deed.docx</b></div>
<svg style="left:278.465625px;top:387.8px" width="7.6" height="7.6" viewBox="0 0 7.6 7.6"><circle cx="3.8" cy="3.8" r="3.25" fill="none" stroke="#4a4a4a" stroke-width="0.95"/><path d="M3.8 1.9 L3.8 4.6" stroke="#4a4a4a" stroke-width="1"/><path d="M2.2 3.9 L3.8 5.7 L5.4 3.9Z" fill="#4a4a4a"/></svg>
<div class="new" style="left:214.8px;top:401.7px;">New</div>
<div class="t rs" style="left:474px;top:385.6px;">Buyer</div>
<div class="sw" style="left:542px;top:384.2px;background:#a84f4f;"></div>
<div class="t st" style="left:575px;top:385.6px;color:#a84f4f;">NOT STARTED</div>
<svg style="left:641px;top:386.2px" width="10" height="10" viewBox="0 0 10 10"><rect x="0.5" y="0.6" width="9" height="8.8" rx="3.6" fill="none" stroke="#8f8f8f" stroke-width="0.95"/><path d="M4.6 0.8 L4.6 5 L9 5" fill="none" stroke="#8f8f8f" stroke-width="0.85"/></svg>
<div class="t pd" style="left:670.8px;top:388.1px;">PENDING</div>
<svg style="left:721px;top:384.4px" width="30" height="11" viewBox="0 0 30 11"><path d="M5.1 0.6 L6.4 3.6 L9.6 3.8 L7.2 5.9 L8 9.2 L5.1 7.5 L2.2 9.2 L3 5.9 L0.6 3.8 L3.8 3.6Z" fill="none" stroke="#555" stroke-width="0.85" stroke-linejoin="round"/><circle cx="21.5" cy="4.8" r="5.1" fill="none" stroke="#555" stroke-width="0.85"/><g fill="#444"><circle cx="19.2" cy="4.8" r="0.75"/><circle cx="21.5" cy="4.8" r="0.75"/><circle cx="23.8" cy="4.8" r="0.75"/></g></svg>
</div>
<div class="a" style="left:0;top:404.5px;width:768px;height:28px;background:#fff;"></div>
<div class="a" style="left:765px;top:31px;width:3px;height:374px;background:#fff;"></div>
</body></html>
